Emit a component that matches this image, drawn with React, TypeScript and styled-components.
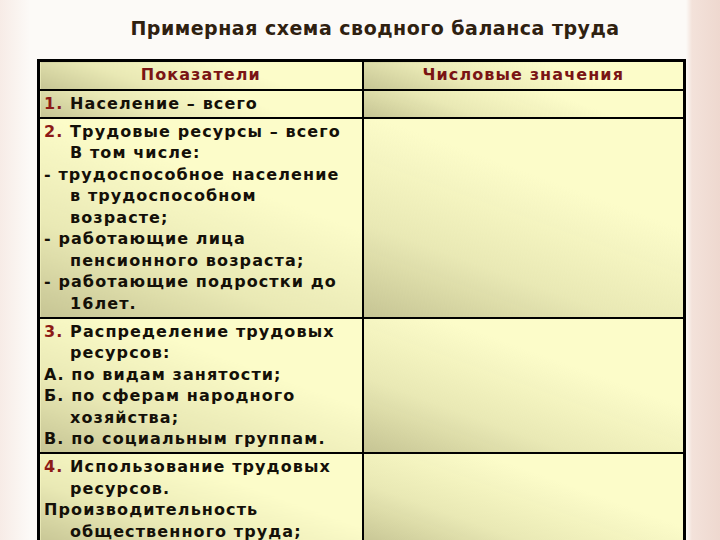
import React from "react";
import styled, { createGlobalStyle } from "styled-components";

const Global = createGlobalStyle`
  html, body { margin: 0; padding: 0; }
  body {
    width: 720px;
    height: 540px;
    overflow: hidden;
    font-family: "DejaVu Sans", Verdana, sans-serif;
  }
`;

const Slide = styled.div`
  width: 720px;
  height: 540px;
  box-sizing: border-box;
  padding: 14px 34px 0 37px;
  background:
    linear-gradient(90deg, rgba(240, 218, 210, 0.45) 0px, rgba(250, 240, 236, 0) 30px),
    linear-gradient(90deg, rgba(255,255,255,0) 686px, #f3e2da 692px, #eed8cf 720px),
    #fcfaf7;
  display: flex;
  flex-direction: column;
  overflow: hidden;
`;

const Title = styled.h1`
  margin: 0 0 17px 0;
  font-size: 19px;
  line-height: 28px;
  letter-spacing: 0.5px;
  font-weight: bold;
  color: #2f2110;
  text-align: center;
  padding-left: 27px;
  white-space: nowrap;
`;

const Table = styled.table`
  border-collapse: collapse;
  width: 649px;
  border: 3px solid #000;
  table-layout: fixed;
`;

const Cell = styled.td<{ $head?: boolean }>`
  border: 2px solid #000;
  vertical-align: top;
  padding: ${(p) => (p.$head ? "2px 4px 3px 4px" : "2px 2px 2.6px 4px")};
  background:
    linear-gradient(20deg, rgba(180, 178, 130, 0.75) 0%, rgba(205, 204, 150, 0.4) 30%, rgba(250, 250, 200, 0) 65%),
    #fcfcc9;
  font-size: 16px;
  line-height: 21.5px;
  letter-spacing: 1.1px;
  font-weight: bold;
  color: #141008;
  text-align: ${(p) => (p.$head ? "center" : "left")};
  white-space: nowrap;
`;

const HeadText = styled.span`
  color: #7a1414;
`;

const Line = styled.div<{ $indent?: boolean }>`
  padding-left: ${(p) => (p.$indent ? "26px" : "0")};
`;

const Num = styled.span`
  color: #8c1a16;
`;

export default function App() {
  return (
    <>
      <Global />
      <Slide>
        <Title>Примерная схема сводного баланса труда</Title>
        <Table>
          <colgroup>
            <col style={{ width: 324 }} />
            <col />
          </colgroup>
          <tbody>
            <tr>
              <Cell $head><HeadText>Показатели</HeadText></Cell>
              <Cell $head><HeadText>Числовые значения</HeadText></Cell>
            </tr>
            <tr>
              <Cell><Line><Num>1.</Num> Население – всего</Line></Cell>
              <Cell />
            </tr>
            <tr>
              <Cell>
                <Line><Num>2.</Num> Трудовые ресурсы – всего</Line>
                <Line $indent>В том числе:</Line>
                <Line>- трудоспособное население</Line>
                <Line $indent>в трудоспособном</Line>
                <Line $indent>возрасте;</Line>
                <Line>- работающие лица</Line>
                <Line $indent>пенсионного возраста;</Line>
                <Line>- работающие подростки до</Line>
                <Line $indent>16лет.</Line>
              </Cell>
              <Cell />
            </tr>
            <tr>
              <Cell>
                <Line><Num>3.</Num> Распределение трудовых</Line>
                <Line $indent>ресурсов:</Line>
                <Line>А. по видам занятости;</Line>
                <Line>Б. по сферам народного</Line>
                <Line $indent>хозяйства;</Line>
                <Line>В. по социальным группам.</Line>
              </Cell>
              <Cell />
            </tr>
            <tr>
              <Cell>
                <Line><Num>4.</Num> Использование трудовых</Line>
                <Line $indent>ресурсов.</Line>
                <Line>Производительность</Line>
                <Line $indent>общественного труда;</Line>
              </Cell>
              <Cell />
            </tr>
          </tbody>
        </Table>
      </Slide>
    </>
  );
}
